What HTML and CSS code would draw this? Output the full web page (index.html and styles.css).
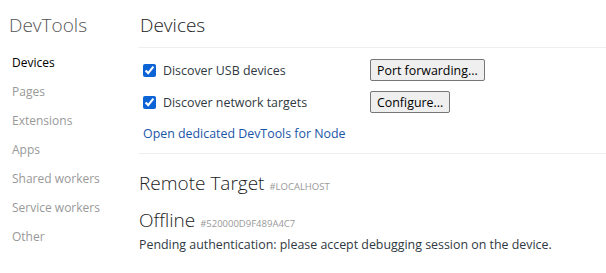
FILE: index.html
```html
<!DOCTYPE html>
<html lang="en">
<head>
  <meta charset="UTF-8">
  <title>Inspect with Chrome Developer Tools</title>
  <link rel="stylesheet" href="styles.css">
</head>
<body>
  <div class="page">
    <div class="sidebar">
      <h1 class="sidebar-title">DevTools</h1>
      <ul class="nav">
        <li class="selected">Devices</li>
        <li>Pages</li>
        <li>Extensions</li>
        <li>Apps</li>
        <li>Shared workers</li>
        <li>Service workers</li>
        <li>Other</li>
      </ul>
    </div>

    <div class="content">
      <div class="content-header">Devices</div>

      <div class="device-settings">
        <div class="checkbox-row">
          <label><input type="checkbox" checked> Discover USB devices</label>
          <button>Port forwarding...</button>
        </div>
        <div class="checkbox-row">
          <label><input type="checkbox" checked> Discover network targets</label>
          <button>Configure...</button>
        </div>
        <a href="#" class="node-link">Open dedicated DevTools for Node</a>
      </div>

      <div class="device">
        <div class="device-header">Remote Target <span class="device-serial">#LOCALHOST</span></div>
        <div class="browser-header">Offline <span class="device-serial">#520000D9F489A4C7</span></div>
        <div class="device-auth">Pending authentication: please accept debugging session on the device.</div>
      </div>
    </div>
  </div>
</body>
</html>
```

FILE: styles.css
```css
body {
  margin: 0;
  font-family: "Open Sans", sans-serif;
  font-size: 12px;
  color: #303942;
  background: #fff;
}
.page {
  display: flex;
}
.sidebar {
  width: 139px;
  flex-shrink: 0;
}
.sidebar-title {
  margin: 0;
  padding: 12px 0 0 9px;
  font-size: 19px;
  font-weight: 300;
  color: #555;
  line-height: 26px;
}
.nav {
  list-style: none;
  margin: 15px 0 0;
  padding: 0 0 0 12px;
}
.nav li {
  height: 29px;
  line-height: 20px;
  color: #999;
}
.nav li.selected {
  color: #000;
}
.content {
  flex: 1;
  font-size: 12.4px;
}
.content-header {
  padding: 12px 0 0 1px;
  height: 48px;
  font-size: 19px;
  font-weight: 300;
  line-height: 26px;
  color: #222;
  border-bottom: 1px solid #eee;
  box-sizing: border-box;
}
.device-settings {
  padding: 6px 0 11px 4px;
  border-bottom: 1px solid #eee;
}
.checkbox-row {
  display: flex;
  align-items: center;
  height: 32px;
}
.checkbox-row label {
  width: 227px;
  display: flex;
  align-items: center;
}
.checkbox-row input {
  margin: 0 7px 0 0;
  width: 13px;
  height: 13px;
  accent-color: #0b63d6;
}
.checkbox-row button {
  font-family: "Open Sans", sans-serif;
  font-size: 12.4px;
  color: #000;
  background: #efefef;
  border: 1px solid #767676;
  border-radius: 2px;
  padding: 1px 6px;
  height: 22px;
}
.node-link {
  display: block;
  margin-top: 7px;
  color: #1a55a8;
  text-decoration: none;
}
.device {
  padding: 16px 0 0 0;
}
.device-header {
  font-size: 19px;
  font-weight: 300;
  line-height: 26px;
  color: #222;
}
.browser-header {
  margin-top: 8px;
  font-size: 19px;
  font-weight: 300;
  line-height: 24px;
  color: #222;
}
.device-serial {
  font-size: 9.5px;
  font-weight: normal;
  color: #999;
}
.device-auth {
  line-height: 18px;
}
```
